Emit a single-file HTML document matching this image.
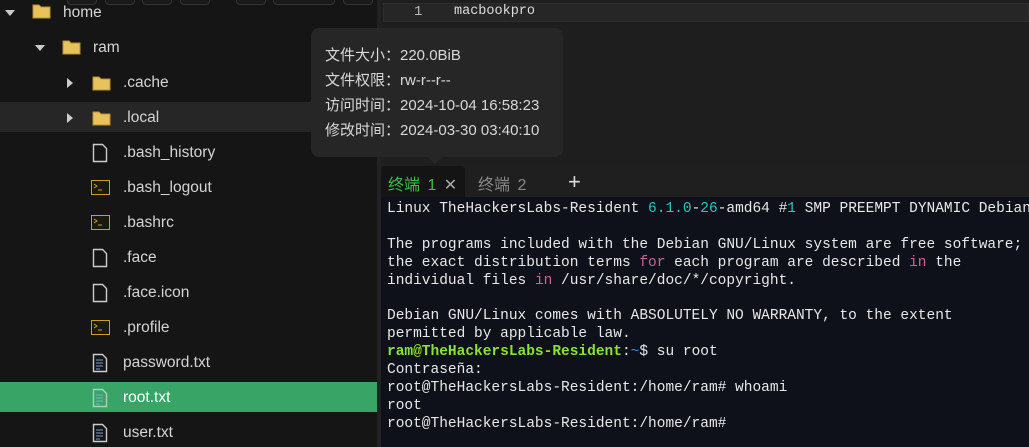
<!DOCTYPE html><html><head><meta charset="utf-8"><style>
*{margin:0;padding:0;box-sizing:border-box}
body{width:1029px;height:447px;overflow:hidden;background:#151515;position:relative;font-family:"Liberation Sans","Noto Sans CJK SC",sans-serif}
.left{position:absolute;left:0;top:0;width:377px;height:447px;background:#151515;overflow:hidden}
.btn{position:absolute;top:-8px;height:13px;border:1px solid #333;border-radius:4px;background:#1a1a1a}
.row{position:absolute;left:0;width:377px;height:30px;color:#d4d4d4;font-size:15.5px;line-height:32px}
.row span{position:absolute;top:0}
.arr{position:absolute;width:0;height:0}
.ico{position:absolute}
.div{position:absolute;left:377px;top:0;width:4px;height:447px;background:#222}
.editor{position:absolute;left:381px;top:0;width:648px;height:163px;background:#1e1e1e}
.tabs{position:absolute;left:381px;top:163px;width:648px;height:34px;background:#1f1f1f}
.term{position:absolute;left:381px;top:197px;width:648px;height:250px;overflow:hidden;background:#0e1119;color:#e8e8e8;font-family:"Liberation Mono",monospace;font-size:14.5px;line-height:17.9px;padding:4px 0 0 6px;white-space:pre}
.c{color:#2ec4c4}.p{color:#d0609a}.g{color:#8ae234;font-weight:bold}.b{color:#3b8eea}
.tip{position:absolute;left:311px;top:28px;width:252px;height:129px;background:#262626;border-radius:8px;color:#d8d8d8;font-size:15px;padding:15px 0 0 14px;line-height:25px}
</style></head><body>
<div class="left">
<div class="btn" style="left:67px;width:30px"></div><div class="btn" style="left:105px;width:30px"></div><div class="btn" style="left:142px;width:30px"></div><div class="btn" style="left:180px;width:30px"></div><div class="btn" style="left:236px;width:30px"></div><div class="btn" style="left:273px;width:62px"></div><div class="btn" style="left:343px;width:30px"></div>
<div class="row" style="top:-3px"><div class="arr" style="left:5px;top:13px;border-left:5px solid transparent;border-right:5px solid transparent;border-top:6px solid #ccc"></div><svg class="ico" style="left:32px;top:7px" width="19" height="15"><path d="M1 1h6l2 2h9v11H1z" fill="#e8c25a" stroke="#b89030" stroke-width="1"/></svg><span style="left:63px">home</span></div>
<div class="row" style="top:32px"><div class="arr" style="left:35px;top:13px;border-left:5px solid transparent;border-right:5px solid transparent;border-top:6px solid #ccc"></div><svg class="ico" style="left:62px;top:8px" width="19" height="15"><path d="M1 1h6l2 2h9v11H1z" fill="#e8c25a" stroke="#b89030"/></svg><span style="left:93px">ram</span></div>
<div class="row" style="top:67px"><div class="arr" style="left:67px;top:11px;border-top:5px solid transparent;border-bottom:5px solid transparent;border-left:6px solid #ccc"></div><svg class="ico" style="left:92px;top:9px" width="19" height="15"><path d="M1 1h6l2 2h9v11H1z" fill="#e8c25a" stroke="#b89030"/></svg><span style="left:123px">.cache</span></div>
<div class="row" style="top:102px;background:#262626"><div class="arr" style="left:67px;top:11px;border-top:5px solid transparent;border-bottom:5px solid transparent;border-left:6px solid #ccc"></div><svg class="ico" style="left:92px;top:9px" width="19" height="15"><path d="M1 1h6l2 2h9v11H1z" fill="#e8c25a" stroke="#b89030"/></svg><span style="left:123px">.local</span></div>
<div class="row" style="top:137px"><svg class="ico" style="left:92px;top:6px" width="16" height="20"><path d="M1.5 1.5h9l4 4v13h-13z" fill="none" stroke="#ccc" stroke-width="1.4"/></svg><span style="left:123px">.bash_history</span></div>
<div class="row" style="top:172px"><svg class="ico" style="left:91px;top:8px" width="20" height="16"><rect x=".5" y=".5" width="18" height="14" fill="#1a1a10" stroke="#c9a21c"/><path d="M3 4l3 2-3 2M7 10h4" stroke="#c9a21c" fill="none"/></svg><span style="left:123px">.bash_logout</span></div>
<div class="row" style="top:207px"><svg class="ico" style="left:91px;top:8px" width="20" height="16"><rect x=".5" y=".5" width="18" height="14" fill="#1a1a10" stroke="#c9a21c"/><path d="M3 4l3 2-3 2M7 10h4" stroke="#c9a21c" fill="none"/></svg><span style="left:123px">.bashrc</span></div>
<div class="row" style="top:242px"><svg class="ico" style="left:92px;top:6px" width="16" height="20"><path d="M1.5 1.5h9l4 4v13h-13z" fill="none" stroke="#ccc" stroke-width="1.4"/></svg><span style="left:123px">.face</span></div>
<div class="row" style="top:277px"><svg class="ico" style="left:92px;top:6px" width="16" height="20"><path d="M1.5 1.5h9l4 4v13h-13z" fill="none" stroke="#ccc" stroke-width="1.4"/></svg><span style="left:123px">.face.icon</span></div>
<div class="row" style="top:312px"><svg class="ico" style="left:91px;top:8px" width="20" height="16"><rect x=".5" y=".5" width="18" height="14" fill="#1a1a10" stroke="#c9a21c"/><path d="M3 4l3 2-3 2M7 10h4" stroke="#c9a21c" fill="none"/></svg><span style="left:123px">.profile</span></div>
<div class="row" style="top:347px"><svg class="ico" style="left:92px;top:6px" width="16" height="20"><path d="M1.5 1.5h9l4 4v13h-13z" fill="none" stroke="#ccc" stroke-width="1.4"/><path d="M4 7h7M4 10h7M4 13h7M4 16h4" stroke="#7aa0d0"/></svg><span style="left:123px">password.txt</span></div>
<div class="row" style="top:382px;background:#38a567;color:#fff"><svg class="ico" style="left:92px;top:6px" width="16" height="20"><path d="M1.5 1.5h9l4 4v13h-13z" fill="none" stroke="#aacfb8" stroke-width="1.4"/><path d="M4 7h7M4 10h7M4 13h7M4 16h4" stroke="#7ab0c0"/></svg><span style="left:123px">root.txt</span></div>
<div class="row" style="top:417px"><svg class="ico" style="left:92px;top:6px" width="16" height="20"><path d="M1.5 1.5h9l4 4v13h-13z" fill="none" stroke="#ccc" stroke-width="1.4"/><path d="M4 7h7M4 10h7M4 13h7M4 16h4" stroke="#7aa0d0"/></svg><span style="left:123px">user.txt</span></div>
</div>
<div class="div"></div>
<div class="editor"><div style="position:absolute;left:2px;top:3px;width:646px;height:19px;background:#262626;border:1px solid #2e2e2e"></div><div style="position:absolute;left:33px;top:4px;color:#bbb;font:14px 'Liberation Mono',monospace">1</div><div style="position:absolute;left:73px;top:4px;color:#ddd;font:13.5px 'Liberation Mono',monospace">macbookpro</div></div>
<div class="tabs"><div style="position:absolute;left:0;top:3px;width:84px;height:31px;background:#141414;border-radius:4px 4px 0 0"></div><div style="position:absolute;left:7px;top:8px;color:#3fb950;font-size:16px;word-spacing:3px">终端 1 <span style="color:#aaa">✕</span></div><div style="position:absolute;left:97px;top:8px;color:#888;font-size:16px;word-spacing:3px">终端 2</div><div style="position:absolute;left:187px;top:6px;color:#ddd;font-size:22px">+</div></div>
<div class="term">Linux TheHackersLabs-Resident <span class="c">6.1.0</span>-<span class="c">26</span>-amd64 #<span class="c">1</span> SMP PREEMPT DYNAMIC Debian

The programs included with the Debian GNU/Linux system are free software;
the exact distribution terms <span class="p">for</span> each program are described <span class="p">in</span> the
individual files <span class="p">in</span> /usr/share/doc/*/copyright.

Debian GNU/Linux comes with ABSOLUTELY NO WARRANTY, to the extent
permitted by applicable law.
<span class="g">ram@TheHackersLabs-Resident</span>:<span class="b">~</span>$ su root
Contraseña:
root@TheHackersLabs-Resident:/home/ram# whoami
root
root@TheHackersLabs-Resident:/home/ram#</div>
<div class="tip">文件大小：220.0BiB<br>文件权限：rw-r--r--<br>访问时间：2024-10-04 16:58:23<br>修改时间：2024-03-30 03:40:10</div>
<div style="position:absolute;left:428px;top:157px;border-left:7px solid transparent;border-right:7px solid transparent;border-top:7px solid #262626"></div>
</body></html>
